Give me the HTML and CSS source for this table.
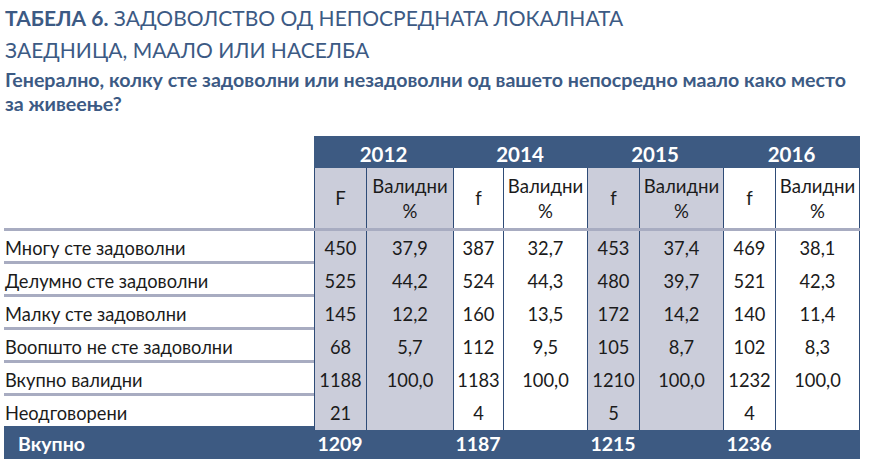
FILE: index.html
```html
<!DOCTYPE html>
<html lang="mk">
<head>
<meta charset="utf-8">
<title>Табела 6</title>
<link rel="stylesheet" href="styles.css">
</head>
<body>
<div class="page">
  <h1 class="title"><span class="lead">ТАБЕЛА 6.</span> ЗАДОВОЛСТВО ОД НЕПОСРЕДНАТА ЛОКАЛНАТА ЗАЕДНИЦА, МААЛО ИЛИ НАСЕЛБА</h1>
  <p class="subtitle">Генерално, колку сте задоволни или незадоволни од вашето непосредно маало како место<br>за живеење?</p>

  <div class="table">
    <div class="row years">
      <div class="blank"></div>
      <div class="year">2012</div>
      <div class="year">2014</div>
      <div class="year">2015</div>
      <div class="year">2016</div>
    </div>
    <div class="row sub line">
      <div class="label"></div>
      <div class="c g">F</div><div class="c g">Валидни<br>%</div>
      <div class="c">f</div><div class="c">Валидни<br>%</div>
      <div class="c g">f</div><div class="c g">Валидни<br>%</div>
      <div class="c">f</div><div class="c last">Валидни<br>%</div>
    </div>
    <div class="row data line">
      <div class="label">Многу сте задоволни</div>
      <div class="c g">450</div><div class="c g">37,9</div>
      <div class="c">387</div><div class="c">32,7</div>
      <div class="c g">453</div><div class="c g">37,4</div>
      <div class="c">469</div><div class="c last">38,1</div>
    </div>
    <div class="row data line">
      <div class="label">Делумно сте задоволни</div>
      <div class="c g">525</div><div class="c g">44,2</div>
      <div class="c">524</div><div class="c">44,3</div>
      <div class="c g">480</div><div class="c g">39,7</div>
      <div class="c">521</div><div class="c last">42,3</div>
    </div>
    <div class="row data line">
      <div class="label">Малку сте задоволни</div>
      <div class="c g">145</div><div class="c g">12,2</div>
      <div class="c">160</div><div class="c">13,5</div>
      <div class="c g">172</div><div class="c g">14,2</div>
      <div class="c">140</div><div class="c last">11,4</div>
    </div>
    <div class="row data line">
      <div class="label">Воопшто не сте задоволни</div>
      <div class="c g">68</div><div class="c g">5,7</div>
      <div class="c">112</div><div class="c">9,5</div>
      <div class="c g">105</div><div class="c g">8,7</div>
      <div class="c">102</div><div class="c last">8,3</div>
    </div>
    <div class="row data line">
      <div class="label">Вкупно валидни</div>
      <div class="c g">1188</div><div class="c g">100,0</div>
      <div class="c">1183</div><div class="c">100,0</div>
      <div class="c g">1210</div><div class="c g">100,0</div>
      <div class="c">1232</div><div class="c last">100,0</div>
    </div>
    <div class="row data noline">
      <div class="label">Неодговорени</div>
      <div class="c g">21</div><div class="c g"></div>
      <div class="c">4</div><div class="c"></div>
      <div class="c g">5</div><div class="c g"></div>
      <div class="c">4</div><div class="c last"></div>
    </div>
    <div class="row total">
      <div class="label">Вкупно</div>
      <div class="t">1209</div><div class="t"></div>
      <div class="t">1187</div><div class="t"></div>
      <div class="t">1215</div><div class="t"></div>
      <div class="t">1236</div><div class="t"></div>
    </div>
  </div>
</div>
</body>
</html>
```

FILE: styles.css
```css
* { box-sizing: border-box; }

html, body {
  margin: 0;
  padding: 0;
  background: #ffffff;
}

.page {
  font-family: Lato, "Noto Sans", sans-serif;
  color: #3c5a84;
  padding-top: 2px;
}

.title {
  margin: 0 0 0 5px;
  font-size: 21px;
  font-weight: 400;
  line-height: 31.5px;
  color: #3c5a84;
  width: 700px;
}

.title .lead { font-weight: 700; }

.subtitle {
  margin: 3px 0 0 5px;
  font-size: 19.6px;
  font-weight: 700;
  line-height: 24px;
  color: #3c5a84;
  white-space: nowrap;
}

.table {
  margin: 20px 0 0 4px;
  width: 856px;
  color: #1b1b1b;
  font-size: 18.3px;
}

.row {
  display: grid;
  grid-template-columns: 310px 52px 87px 50px 84px 52px 84px 52px 85px;
}

.row.line { border-bottom: 3px solid #a8acc1; }

.years { height: 32px; }
.years .year {
  grid-column: span 2;
  background: #3d5a82;
  color: #ffffff;
  font-weight: 700;
  font-size: 20.5px;
  text-align: center;
  line-height: 36px;
}

.sub { height: 63px; }
.sub .c {
  display: flex;
  align-items: center;
  justify-content: center;
  text-align: center;
  line-height: 25px;
  font-size: 18.6px;
  padding-top: 1px;
}

.c {
  border-left: 1px solid #2f4c77;
  text-align: center;
  background: #ffffff;
}

.c.g { background: #cbcdda; }
.c.last { border-right: 1px solid #2f4c77; }

.data { height: 33px; }
.data .c, .data .label { line-height: 34px; }
.data.noline { height: 30px; }

.label {
  padding-left: 1px;
  white-space: nowrap;
}

.total {
  height: 33px;
  background: #3d5a82;
  color: #ffffff;
  font-weight: 700;
  font-size: 19.5px;
  line-height: 36px;
}

.total .label { padding-left: 14px; }
.total .t { text-align: center; }
```
